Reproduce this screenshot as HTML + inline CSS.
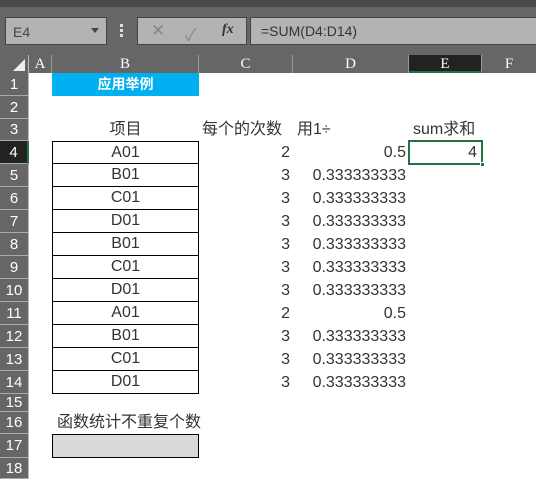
<!DOCTYPE html>
<html><head><meta charset="utf-8"><style>
*{margin:0;padding:0;box-sizing:border-box}
body{width:536px;height:479px;overflow:hidden;background:#fff;position:relative;font-family:"Liberation Sans","Noto Sans CJK SC",sans-serif;color:#333}
.a{position:absolute}
.top{left:0;top:0;width:536px;height:55px;background:#666}
.strip{left:0;top:0;width:536px;height:7px;background:#4a4a4a}
.nb{left:5px;top:17px;width:102px;height:28px;background:#b3b3b3;border:1px solid #444;font-size:14px;color:#444;padding:6px 0 0 7px}
.btns{left:137px;top:17px;width:110px;height:28px;background:#b3b3b3;border:1px solid #444}
.fx{left:250px;top:17px;width:290px;height:28px;background:#b3b3b3;border:1px solid #444;font-size:14px;color:#333;padding:5px 0 0 10px}
.ch{top:55px;height:18px;background:#666;color:#fff;font-family:"Liberation Serif",serif;font-size:15px;text-align:center;line-height:18px;border-right:1px solid #999}
.rh{left:0;width:29px;background:#666;color:#fff;font-size:15px;text-align:center;border-bottom:1px solid #aaa;border-right:1px solid #bbb}
.c{font-size:16px;line-height:22px;white-space:nowrap}
.bx{left:52px;width:147px;border:1px solid #000;border-top:none;text-align:center;font-size:16px;line-height:22px}
.r{text-align:right}
</style></head><body>
<div class="a top"></div><div class="a strip"></div>
<div class="a nb">E4<span style="position:absolute;right:7px;top:10px;border:4px solid transparent;border-top:5px solid #444"></span></div>
<div class="a" style="left:120px;top:24px;width:3px;height:3px;background:#ddd;box-shadow:0 5px #ddd,0 10px #ddd"></div>
<div class="a btns">
<span class="a" style="left:13px;top:3px;font-size:17px;color:#888">✕</span>
<span class="a" style="left:47px;top:3px;font-size:17px;color:#888">✓</span>
<span class="a" style="left:84px;top:4px;font-size:14px;font-family:'Liberation Serif',serif;font-style:italic;font-weight:bold;color:#333">fx</span>
</div>
<div class="a fx">=SUM(D4:D14)</div>
<div class="a ch" style="left:0;width:29px;border-right:1px solid #bbb"><span class="a" style="right:3px;bottom:2px;border-left:12px solid transparent;border-bottom:12px solid #eee"></span></div>
<div class="a ch" style="left:29px;width:23px">A</div>
<div class="a ch" style="left:52px;width:147px">B</div>
<div class="a ch" style="left:199px;width:94px">C</div>
<div class="a ch" style="left:293px;width:116px">D</div>
<div class="a ch" style="left:409px;width:73px;background:#222;border-bottom:2px solid #217346">E</div>
<div class="a ch" style="left:482px;width:54px;border:none">F</div>

<div class="a rh" style="top:73px;height:23px;line-height:23px">1</div>
<div class="a rh" style="top:96px;height:23px;line-height:23px">2</div>
<div class="a rh" style="top:119px;height:22px;line-height:22px">3</div>
<div class="a rh" style="top:141px;height:23px;line-height:23px;background:#222;border-right:2px solid #217346">4</div>
<div class="a rh" style="top:164px;height:23px;line-height:23px">5</div>
<div class="a rh" style="top:187px;height:23px;line-height:23px">6</div>
<div class="a rh" style="top:210px;height:23px;line-height:23px">7</div>
<div class="a rh" style="top:233px;height:23px;line-height:23px">8</div>
<div class="a rh" style="top:256px;height:23px;line-height:23px">9</div>
<div class="a rh" style="top:279px;height:23px;line-height:23px">10</div>
<div class="a rh" style="top:302px;height:23px;line-height:23px">11</div>
<div class="a rh" style="top:325px;height:23px;line-height:23px">12</div>
<div class="a rh" style="top:348px;height:23px;line-height:23px">13</div>
<div class="a rh" style="top:371px;height:23px;line-height:23px">14</div>
<div class="a rh" style="top:394px;height:18px;line-height:18px">15</div>
<div class="a rh" style="top:412px;height:22px;line-height:22px">16</div>
<div class="a rh" style="top:434px;height:24px;line-height:24px">17</div>
<div class="a rh" style="top:458px;height:21px;line-height:21px">18</div>

<div class="a" style="left:52px;top:73px;width:147px;height:23px;background:#00b0f0;color:#fff;font-weight:bold;font-size:14px;text-align:center;line-height:23px">应用举例</div>

<div class="a c" style="left:52px;width:147px;top:119px;text-align:center">项目</div>
<div class="a c" style="left:202px;top:119px">每个的次数</div>
<div class="a c" style="left:297px;top:119px">用1÷</div>
<div class="a c" style="left:413px;top:119px">sum求和</div>

<div class="a bx" style="top:141px;height:23px;border-top:1px solid #000">A01</div>
<div class="a bx" style="top:164px;height:23px">B01</div>
<div class="a bx" style="top:187px;height:23px">C01</div>
<div class="a bx" style="top:210px;height:23px">D01</div>
<div class="a bx" style="top:233px;height:23px">B01</div>
<div class="a bx" style="top:256px;height:23px">C01</div>
<div class="a bx" style="top:279px;height:23px">D01</div>
<div class="a bx" style="top:302px;height:23px">A01</div>
<div class="a bx" style="top:325px;height:23px">B01</div>
<div class="a bx" style="top:348px;height:23px">C01</div>
<div class="a bx" style="top:371px;height:23px">D01</div>

<div class="a c r" style="left:199px;width:91px;top:142px">2</div>
<div class="a c r" style="left:199px;width:91px;top:165px">3</div>
<div class="a c r" style="left:199px;width:91px;top:188px">3</div>
<div class="a c r" style="left:199px;width:91px;top:211px">3</div>
<div class="a c r" style="left:199px;width:91px;top:234px">3</div>
<div class="a c r" style="left:199px;width:91px;top:257px">3</div>
<div class="a c r" style="left:199px;width:91px;top:280px">3</div>
<div class="a c r" style="left:199px;width:91px;top:303px">2</div>
<div class="a c r" style="left:199px;width:91px;top:326px">3</div>
<div class="a c r" style="left:199px;width:91px;top:349px">3</div>
<div class="a c r" style="left:199px;width:91px;top:372px">3</div>

<div class="a c r" style="left:293px;width:113px;top:142px">0.5</div>
<div class="a c r" style="left:293px;width:113px;top:165px">0.333333333</div>
<div class="a c r" style="left:293px;width:113px;top:188px">0.333333333</div>
<div class="a c r" style="left:293px;width:113px;top:211px">0.333333333</div>
<div class="a c r" style="left:293px;width:113px;top:234px">0.333333333</div>
<div class="a c r" style="left:293px;width:113px;top:257px">0.333333333</div>
<div class="a c r" style="left:293px;width:113px;top:280px">0.333333333</div>
<div class="a c r" style="left:293px;width:113px;top:303px">0.5</div>
<div class="a c r" style="left:293px;width:113px;top:326px">0.333333333</div>
<div class="a c r" style="left:293px;width:113px;top:349px">0.333333333</div>
<div class="a c r" style="left:293px;width:113px;top:372px">0.333333333</div>

<div class="a" style="left:408px;top:140px;width:75px;height:25px;border:2px solid #217346"></div>
<div class="a" style="left:480px;top:162px;width:5px;height:5px;background:#217346;border:1px solid #fff"></div>
<div class="a c r" style="left:409px;width:68px;top:142px">4</div>

<div class="a c" style="left:57px;top:412px">函数统计不重复个数</div>
<div class="a" style="left:52px;top:434px;width:147px;height:24px;background:#d9d9d9;border:1px solid #000"></div>
</body></html>
